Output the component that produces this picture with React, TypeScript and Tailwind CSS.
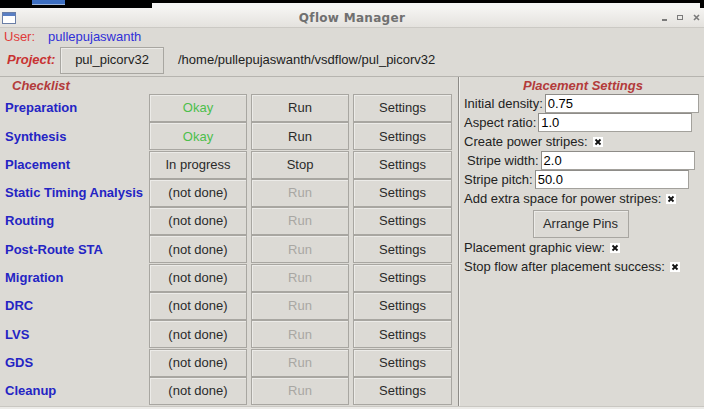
import React from 'react';

const font = "font-['Liberation_Sans',Arial,sans-serif]";

const stages = [
  { name: 'Preparation', status: 'Okay', action: 'Run' },
  { name: 'Synthesis', status: 'Okay', action: 'Run' },
  { name: 'Placement', status: 'In progress', action: 'Stop' },
  { name: 'Static Timing Analysis', status: '(not done)', action: 'Run' },
  { name: 'Routing', status: '(not done)', action: 'Run' },
  { name: 'Post-Route STA', status: '(not done)', action: 'Run' },
  { name: 'Migration', status: '(not done)', action: 'Run' },
  { name: 'DRC', status: '(not done)', action: 'Run' },
  { name: 'LVS', status: '(not done)', action: 'Run' },
  { name: 'GDS', status: '(not done)', action: 'Run' },
  { name: 'Cleanup', status: '(not done)', action: 'Run' },
];

const TkButton = ({ children, className = '' }: { children: React.ReactNode; className?: string }) => (
  <div
    className={`flex items-center justify-center bg-[#dcdad5] border border-[#a8a6a1] shadow-[inset_1px_1px_0_#ecebe8] text-[13px] ${className}`}
  >
    {children}
  </div>
);

const Check = () => (
  <span className="inline-flex items-center justify-center w-[10px] h-[10px] bg-white ml-[5px]">
    <svg width="8" height="8" viewBox="0 0 8 8">
      <path d="M1.5 1.5 L6.5 6.5 M6.5 1.5 L1.5 6.5" stroke="#111" strokeWidth="1.8" />
    </svg>
  </span>
);

const Entry = ({ value }: { value: string }) => (
  <div className="w-[154px] h-[19px] bg-white border border-[#a3a19c] border-t-[#8e8c88] border-l-[#8e8c88] pl-[2px] flex items-center text-[13px] text-black">
    {value}
  </div>
);

export default function App() {
  return (
    <div className={`w-[704px] h-[409px] overflow-hidden bg-[#dcdad5] flex flex-col ${font}`}>
      {/* desktop strip above window */}
      <div className="h-[8px] bg-black relative shrink-0">
        <div className="absolute left-[32px] top-0 w-[33px] h-[5px] bg-[#3d6fc2] border-b border-[#9bb3d9]" />
        <div className="absolute left-[152px] top-[3px] right-[4px] h-[5px] bg-[#f4f4f4]" />
      </div>

      {/* title bar */}
      <div className="h-[20px] shrink-0 flex items-center bg-gradient-to-b from-[#f5f4f2] to-[#e4e2de] border-b border-[#cbc9c4] relative">
        <div className="ml-[2px] w-[14px] h-[12px] border border-[#6a7ea6] bg-white flex flex-col">
          <div className="h-[3px] bg-[#5a7fc4]" />
        </div>
        <div className="absolute inset-x-0 text-center text-[12px] font-bold text-[#707070] font-['DejaVu_Sans',sans-serif] tracking-[0.3px]">
          Qflow Manager
        </div>
        <div className="ml-auto mr-[4px] flex items-center gap-[10px] text-[#7a7a7a]">
          <span className="w-[5px] h-[2px] bg-[#7a7a7a] mt-[4px]" />
          <span className="w-[6px] h-[5px] border border-[#7a7a7a]" />
          <svg width="7" height="7" viewBox="0 0 7 7">
            <path d="M1 1 L6 6 M6 1 L1 6" stroke="#7a7a7a" strokeWidth="1.6" />
          </svg>
        </div>
      </div>

      {/* user row */}
      <div className="h-[18px] shrink-0 flex items-center pl-[4px] text-[13px]">
        <span className="text-[#e03a3a]">User:</span>
        <span className="ml-[13px] text-[#3030d8]">pullepujaswanth</span>
      </div>

      {/* project row */}
      <div className="h-[28px] mb-[2px] shrink-0 flex items-center text-[13px]">
        <span className="ml-[7px] w-[53px] font-bold italic text-[#c83232]">Project:</span>
        <TkButton className="w-[104px] h-[27px] text-[#222]">pul_picorv32</TkButton>
        <span className="ml-[14px] text-[#222]">/home/pullepujaswanth/vsdflow/pul_picorv32</span>
      </div>

      {/* main area */}
      <div className="flex-1 flex border-t border-[#b6b4af] min-h-0">
        {/* checklist */}
        <div className="w-[459px] shrink-0 flex flex-col border-r border-[#8d8b87]">
          <div className="h-[17px] pl-[12px] flex items-center text-[13px] font-bold italic text-[#b33b3b]">Checklist</div>
          <div className="flex flex-col gap-[0.3px]">
            {stages.map((s) => (
              <div key={s.name} className="flex items-center h-[28px] gap-[4px]">
                <div className="w-[145px] pl-[5px] text-[13px] font-bold text-[#2424c4] whitespace-nowrap">{s.name}</div>
                <TkButton
                  className={`w-[98px] h-full ${s.status === 'Okay' ? 'text-[#4cbf4c]' : 'text-[#2a2a2a]'}`}
                >
                  {s.status}
                </TkButton>
                <TkButton
                  className={`w-[98px] h-full ${s.status === '(not done)' ? 'text-[#a9a7a3]' : 'text-[#2a2a2a]'}`}
                >
                  {s.action}
                </TkButton>
                <TkButton className="w-[99px] h-full text-[#2a2a2a]">Settings</TkButton>
              </div>
            ))}
          </div>
        </div>

        {/* placement settings */}
        <div className="flex-1 flex flex-col pl-[4px] text-[13px] text-[#222] border-l border-[#f0efec]">
          <div className="h-[17px] flex items-center justify-center font-bold italic text-[#b33b3b] pr-[2px]">
            Placement Settings
          </div>
          <div className="h-[19px] flex items-center gap-[2px]">
            <span>Initial density:</span>
            <Entry value="0.75" />
          </div>
          <div className="h-[19px] flex items-center gap-[2px]">
            <span>Aspect ratio:</span>
            <Entry value="1.0" />
          </div>
          <div className="h-[19px] flex items-center">
            <span>Create power stripes:</span>
            <Check />
          </div>
          <div className="h-[19px] flex items-center gap-[2px] pl-[3px]">
            <span>Stripe width:</span>
            <Entry value="2.0" />
          </div>
          <div className="h-[19px] flex items-center gap-[2px]">
            <span>Stripe pitch:</span>
            <Entry value="50.0" />
          </div>
          <div className="h-[20px] flex items-center">
            <span>Add extra space for power stripes:</span>
            <Check />
          </div>
          <div className="h-[29px] flex items-center justify-center pr-[7px]">
            <TkButton className="w-[96px] h-[28px] text-[#2a2a2a]">Arrange Pins</TkButton>
          </div>
          <div className="h-[19px] flex items-center">
            <span>Placement graphic view:</span>
            <Check />
          </div>
          <div className="h-[20px] flex items-center">
            <span>Stop flow after placement success:</span>
            <Check />
          </div>
        </div>
      </div>
      <div className="h-[3px] shrink-0 bg-[#ecebe8] border-t border-[#c9c7c2]" />
    </div>
  );
}
